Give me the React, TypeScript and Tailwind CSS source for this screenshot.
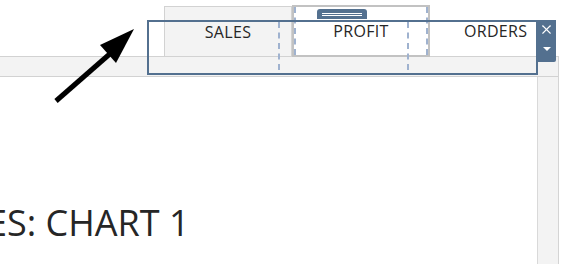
import { X } from 'lucide-react'

function DashedLine({ className }: { className: string }) {
    return (
        <div
            className={`absolute w-0 border-l-2 border-dashed border-[#9fb2cf] ${className}`}
        ></div>
    )
}

export default function App() {
    return (
        <div className="relative w-[570px] h-[264px] overflow-hidden bg-white font-['Open_Sans',sans-serif] text-[#262626]">
            {/* Header Row */}
            <div className="flex h-[56px]">
                <div className="w-[164px] shrink-0"></div>
                <div className="w-[128px] shrink-0 mt-[6px] flex justify-center pt-[15px] bg-[#f3f3f3] border border-b-0 border-[#d2d2d2]">
                    <span className="text-[16px] leading-5 tracking-[0.3px]">SALES</span>
                </div>
                <div className="w-[138px] shrink-0 flex justify-center pt-[21px]">
                    <span className="text-[16px] leading-5 tracking-[0.3px]">PROFIT</span>
                </div>
                <div className="flex-1 flex justify-start pl-[34px] pt-[21px]">
                    <span className="text-[16px] leading-5 tracking-[0.3px]">ORDERS</span>
                </div>
            </div>
            {/* End Header Row */}

            {/* Band + Chart */}
            <div className="flex h-[208px]">
                <div className="flex flex-col w-[559px] shrink-0 border-r border-[#d4d4d4]">
                    <div className="h-[21px] bg-[#f3f3f3] border-y border-[#d2d2d2]"></div>
                    <div className="flex flex-1">
                        <div className="w-[538px] shrink-0 flex items-start pt-[128px] border-r border-[#d9d9d9] overflow-hidden">
                            <span className="ml-[-13px] text-[36px] leading-none whitespace-nowrap">
                                ES: CHART 1
                            </span>
                        </div>
                        <div className="flex-1 bg-[#f3f3f3]"></div>
                    </div>
                </div>
            </div>
            {/* End Band + Chart */}

            {/* Dragged Column */}
            <div className="absolute left-[292px] top-[5px] w-[138px] h-[52px] border-2 border-[#c2c2c2]">
                <DashedLine className="left-[0px] top-[0px] h-[48px]" />
                <DashedLine className="right-[0px] top-[0px] h-[48px]" />
                <div className="absolute left-[23px] top-[2px] w-[50px] h-[10px] rounded-t-[3px] bg-[#53708f] flex flex-col items-center justify-center gap-[1px]">
                    <div className="w-[40px] h-px bg-white"></div>
                    <div className="w-[40px] h-px bg-white"></div>
                </div>
            </div>

            {/* Drop Indicators */}
            <DashedLine className="left-[278px] top-[22px] h-[48px]" />
            <DashedLine className="left-[407px] top-[22px] h-[48px]" />

            {/* Selection */}
            <div className="absolute left-[147px] top-[20px] w-[391px] h-[55px] border-2 border-[#53708f]"></div>
            <div className="absolute left-[537px] top-[20px] w-[19px] h-[42px] bg-[#53708f] rounded-br-[2px] flex flex-col items-center pt-[2px] text-white">
                <X className="w-[15px] h-[15px]" strokeWidth={1.8} />
                <div className="mt-[10px] w-0 h-0 border-l-[4px] border-r-[4px] border-t-[4px] border-l-transparent border-r-transparent border-t-white"></div>
            </div>

            {/* Arrow */}
            <svg className="absolute left-0 top-0" width="570" height="264">
                <line x1="56" y1="101" x2="112" y2="52" stroke="black" strokeWidth="5" />
                <polygon points="134,29 100,45 116,63" fill="black" />
            </svg>
        </div>
    )
}
